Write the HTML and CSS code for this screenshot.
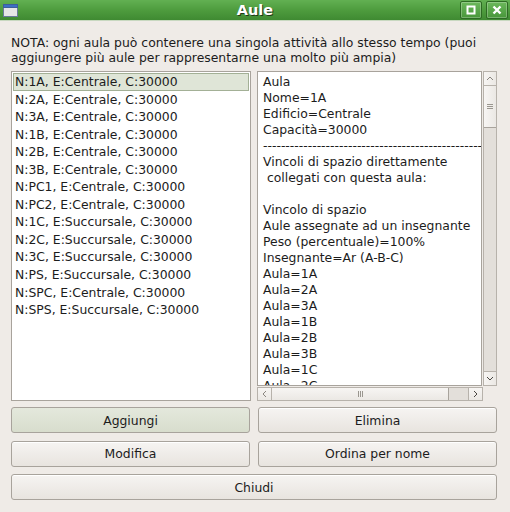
FILE: index.html
```html
<!DOCTYPE html>
<html>
<head>
<meta charset="utf-8">
<link rel="stylesheet" href="styles.css">
</head>
<body>
<div class="window">
  <div class="titlebar">
    <svg class="appicon" width="15" height="13" viewBox="0 0 15 13">
      <rect x="0.5" y="0.5" width="14" height="12" fill="#e6e6e6" stroke="#6a7a9a"/>
      <rect x="0.5" y="0.5" width="14" height="3" fill="#3d6fc4" stroke="#3d5f9a"/>
    </svg>
    <div class="title">Aule</div>
    <div class="tbtns">
      <div class="tbtn">
        <svg width="10" height="10" viewBox="0 0 10 10"><rect x="1.5" y="1.5" width="7" height="7" fill="none" stroke="#fff" stroke-width="2"/></svg>
      </div>
      <div class="tbtn">
        <svg width="10" height="10" viewBox="0 0 10 10"><path d="M1.5 1.5 L8.5 8.5 M8.5 1.5 L1.5 8.5" stroke="#fff" stroke-width="2.4"/></svg>
      </div>
    </div>
  </div>
  <div class="content">
    <p class="note">NOTA: ogni aula può contenere una singola attività allo stesso tempo (puoi aggiungere più aule per rappresentarne una molto più ampia)</p>
    <div class="panels">
      <div class="list">
        <div class="item sel">N:1A, E:Centrale, C:30000</div>
        <div class="item">N:2A, E:Centrale, C:30000</div>
        <div class="item">N:3A, E:Centrale, C:30000</div>
        <div class="item">N:1B, E:Centrale, C:30000</div>
        <div class="item">N:2B, E:Centrale, C:30000</div>
        <div class="item">N:3B, E:Centrale, C:30000</div>
        <div class="item">N:PC1, E:Centrale, C:30000</div>
        <div class="item">N:PC2, E:Centrale, C:30000</div>
        <div class="item">N:1C, E:Succursale, C:30000</div>
        <div class="item">N:2C, E:Succursale, C:30000</div>
        <div class="item">N:3C, E:Succursale, C:30000</div>
        <div class="item">N:PS, E:Succursale, C:30000</div>
        <div class="item">N:SPC, E:Centrale, C:30000</div>
        <div class="item">N:SPS, E:Succursale, C:30000</div>
      </div>
      <div class="detail">
        <div class="detail-top">
          <div class="textbox">
            <div class="line">Aula</div>
            <div class="line">Nome=1A</div>
            <div class="line">Edificio=Centrale</div>
            <div class="line">Capacità=30000</div>
            <div class="line">--------------------------------------------------------</div>
            <div class="line">Vincoli di spazio direttamente</div>
            <div class="line">&nbsp;collegati con questa aula:</div>
            <div class="line">&nbsp;</div>
            <div class="line">Vincolo di spazio</div>
            <div class="line">Aule assegnate ad un insegnante</div>
            <div class="line">Peso (percentuale)=100%</div>
            <div class="line">Insegnante=Ar (A-B-C)</div>
            <div class="line">Aula=1A</div>
            <div class="line">Aula=2A</div>
            <div class="line">Aula=3A</div>
            <div class="line">Aula=1B</div>
            <div class="line">Aula=2B</div>
            <div class="line">Aula=3B</div>
            <div class="line">Aula=1C</div>
            <div class="line">Aula=2C</div>
          </div>
          <div class="vscroll">
            <div class="sbtn">
              <svg width="8" height="5" viewBox="0 0 8 5"><path d="M1 4 L4 1 L7 4" fill="none" stroke="#8a8680" stroke-width="1"/></svg>
            </div>
            <div class="vthumb">
              <svg width="6" height="7" viewBox="0 0 6 7"><path d="M0 1.5 H6 M0 3.5 H6 M0 5.5 H6" stroke="#9a968f" stroke-width="1"/></svg>
            </div>
            <div class="vtrack"></div>
            <div class="sbtn">
              <svg width="8" height="5" viewBox="0 0 8 5"><path d="M1 1 L4 4 L7 1" fill="none" stroke="#4a4742" stroke-width="1"/></svg>
            </div>
          </div>
        </div>
        <div class="hscroll">
          <div class="hbtn">
            <svg width="5" height="8" viewBox="0 0 5 8"><path d="M4 1 L1 4 L4 7" fill="none" stroke="#8a8680" stroke-width="1"/></svg>
          </div>
          <div class="hthumb">
            <svg width="7" height="6" viewBox="0 0 7 6"><path d="M1.5 0 V6 M3.5 0 V6 M5.5 0 V6" stroke="#9a968f" stroke-width="1"/></svg>
          </div>
          <div class="htrack"></div>
          <div class="hbtn">
            <svg width="5" height="8" viewBox="0 0 5 8"><path d="M1 1 L4 4 L1 7" fill="none" stroke="#4a4742" stroke-width="1"/></svg>
          </div>
        </div>
      </div>
    </div>
    <div class="buttons">
      <div class="btn focus">Aggiungi</div>
      <div class="btn">Elimina</div>
      <div class="btn">Modifica</div>
      <div class="btn">Ordina per nome</div>
      <div class="btn wide">Chiudi</div>
    </div>
  </div>
</div>
</body>
</html>
```

FILE: styles.css
```css
html, body {
  margin: 0;
  padding: 0;
}
body {
  width: 510px;
  height: 512px;
  overflow: hidden;
  background: #efebe7;
  font-family: "DejaVu Sans", sans-serif;
  font-size: 12.4px;
  color: #1c1c1c;
}
.window {
  width: 510px;
  height: 512px;
  display: flex;
  flex-direction: column;
}
.titlebar {
  height: 20px;
  flex: none;
  background: linear-gradient(#62b052, #4e9c3e 50%, #3f8a32);
  border-bottom: 1px solid #c8d8c0;
  display: flex;
  align-items: center;
}
.appicon {
  margin-left: 3px;
  flex: none;
}
.title {
  flex: 1;
  text-align: center;
  font-weight: bold;
  font-size: 14.5px;
  color: #fff;
  text-shadow: 1px 1px 0 #1f3a18;
  padding-left: 32px;
}
.tbtns {
  display: flex;
  gap: 4px;
  margin-right: 2px;
}
.tbtn {
  width: 20px;
  height: 16px;
  border: 1px solid #2e6a24;
  border-radius: 2px;
  background: linear-gradient(#6cb85c, #48963a);
  box-shadow: inset 0 0 0 1px rgba(255,255,255,0.25);
  display: flex;
  align-items: center;
  justify-content: center;
}
.content {
  flex: 1;
  display: flex;
  flex-direction: column;
  padding: 0 13px 0 11px;
}
.note {
  margin: 14px 0 6px 0;
  line-height: 15px;
}
.panels {
  display: flex;
  gap: 6px;
  height: 330px;
  flex: none;
}
.list {
  flex: none;
  width: 240px;
  background: #fff;
  border: 1px solid #a8a39c;
  padding: 1px;
  box-sizing: border-box;
  overflow: hidden;
}
.item {
  height: 17.55px;
  line-height: 17px;
  padding-left: 2px;
  white-space: nowrap;
  box-sizing: border-box;
}
.item.sel {
  background: #dfe5d7;
  border: 1px solid #a3b096;
  line-height: 15px;
  padding-left: 1px;
}
.detail {
  flex: 1;
  min-width: 0;
  display: flex;
  flex-direction: column;
}
.detail-top {
  flex: 1;
  display: flex;
  gap: 1px;
  min-height: 0;
}
.textbox {
  flex: 1;
  min-width: 0;
  background: #fff;
  border: 1px solid #a8a39c;
  padding: 2px 0 0 5px;
  overflow: hidden;
}
.line {
  height: 16px;
  line-height: 16px;
  white-space: nowrap;
}
.vscroll {
  width: 12px;
  flex: none;
  display: flex;
  flex-direction: column;
  border: 1px solid #b7b2ab;
  background: #e3dfda;
}
.sbtn {
  height: 13px;
  flex: none;
  background: linear-gradient(90deg, #f7f5f3, #ebe8e4);
  border-bottom: 1px solid #b7b2ab;
  display: flex;
  align-items: center;
  justify-content: center;
}
.sbtn:last-child {
  border-bottom: none;
  border-top: 1px solid #b7b2ab;
}
.vthumb {
  height: 41px;
  flex: none;
  background: linear-gradient(90deg, #f7f5f3, #ebe8e4);
  border-bottom: 1px solid #a8a39c;
  display: flex;
  align-items: center;
  justify-content: center;
}
.vtrack {
  flex: 1;
}
.hscroll {
  height: 12px;
  width: 224px;
  margin-top: 1px;
  flex: none;
  display: flex;
  border: 1px solid #b7b2ab;
  background: #e3dfda;
}
.hbtn {
  width: 13px;
  flex: none;
  background: linear-gradient(#f7f5f3, #ebe8e4);
  border-right: 1px solid #b7b2ab;
  display: flex;
  align-items: center;
  justify-content: center;
}
.hbtn:last-child {
  border-right: none;
  border-left: 1px solid #b7b2ab;
}
.hthumb {
  width: 176px;
  flex: none;
  background: linear-gradient(#f7f5f3, #ebe8e4);
  border-right: 1px solid #a8a39c;
  display: flex;
  align-items: center;
  justify-content: center;
}
.htrack {
  flex: 1;
}
.buttons {
  margin-top: 6px;
  display: grid;
  grid-template-columns: 1fr 1fr;
  column-gap: 8px;
  row-gap: 7.5px;
}
.btn {
  height: 26px;
  box-sizing: border-box;
  border: 1px solid #a8a39c;
  border-radius: 3px;
  background: linear-gradient(#f6f4f2, #e8e4df);
  display: flex;
  align-items: center;
  justify-content: center;
  box-shadow: inset 0 1px 0 #fff;
}
.btn.focus {
  background: linear-gradient(#e4e8dc, #d8ddcd);
  box-shadow: none;
}
.btn.wide {
  grid-column: 1 / 3;
}
```
